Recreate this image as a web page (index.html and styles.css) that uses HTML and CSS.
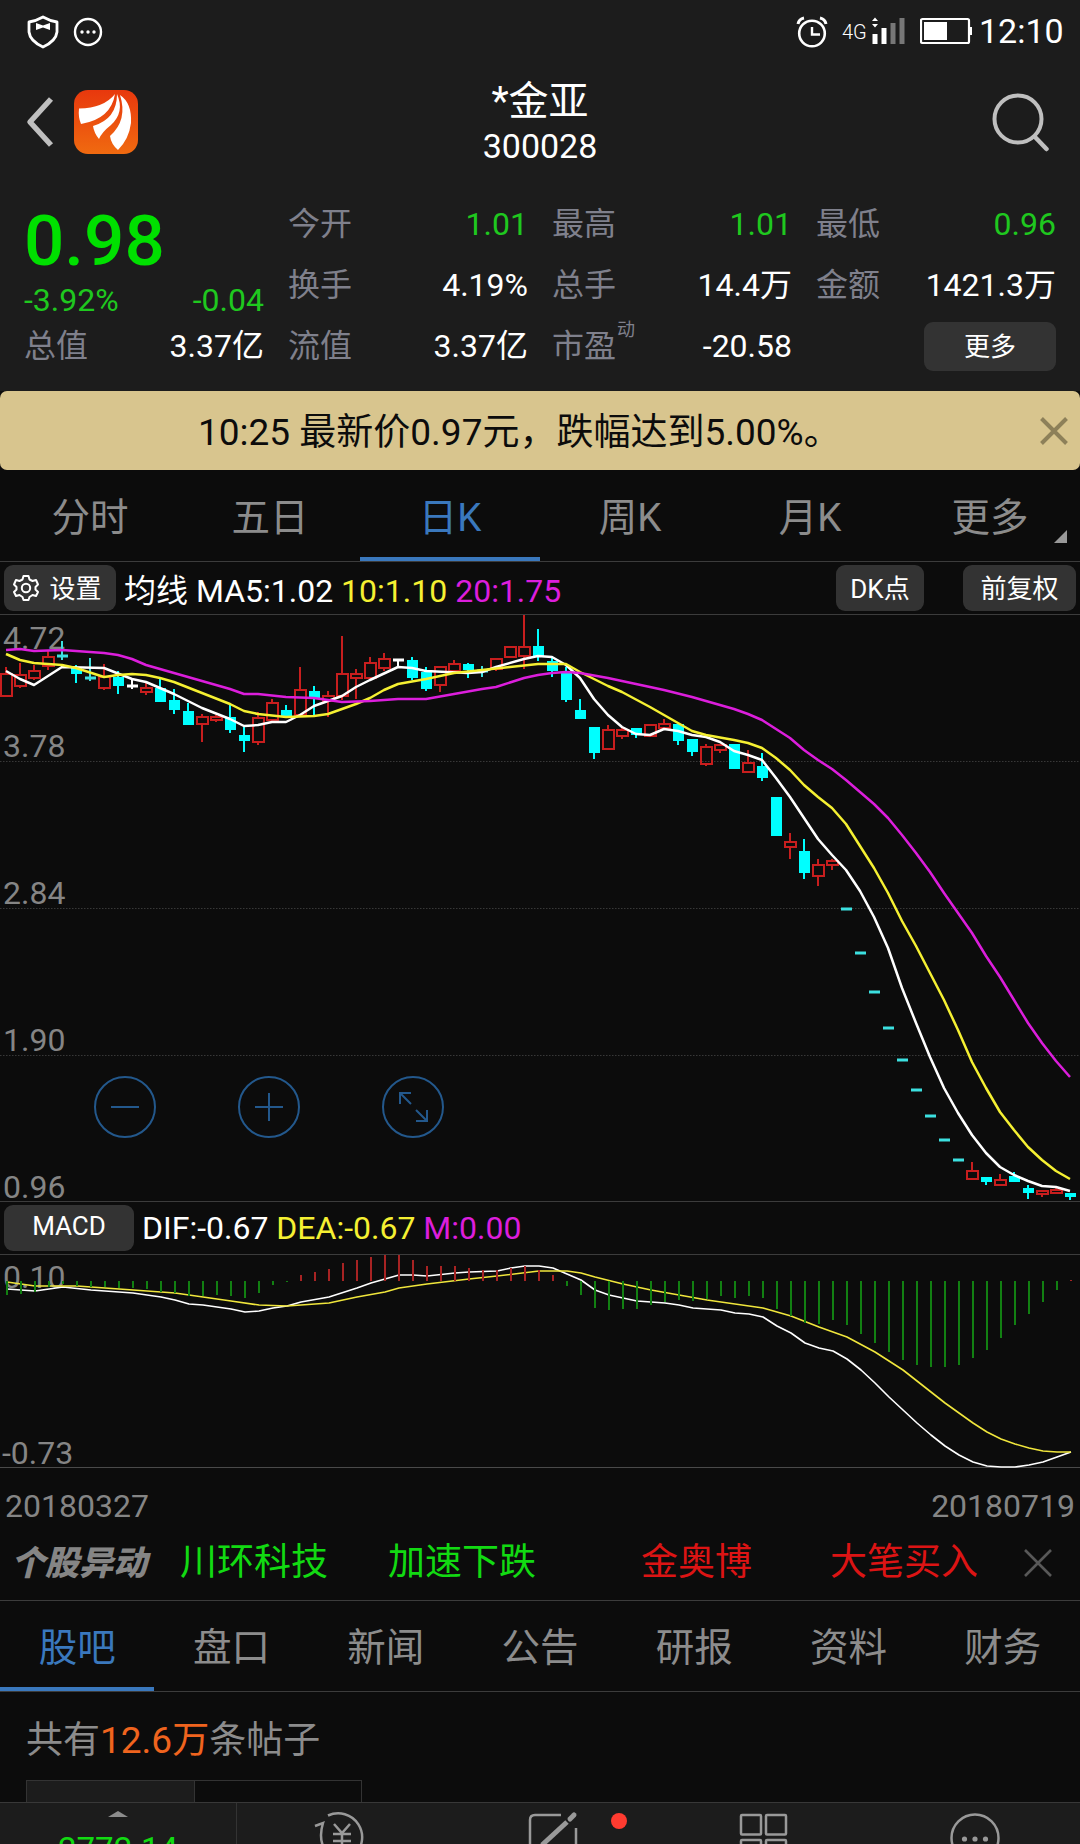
FILE: index.html
```html
<!DOCTYPE html>
<html lang="zh-CN">
<head>
  <meta charset="UTF-8" />
  <meta name="viewport" content="width=device-width, initial-scale=1.0"/>
  <title>*金亚 300028</title>
  <link rel="stylesheet" href="styles.css">
</head>
<body>
  <div class="status-bar">
    <svg class="status-left" width="80" height="64" viewBox="0 0 80 64">
      <path d="M16 17 Q23 21 30 22 V32 Q29 41 16 47 Q3 41 2 32 V22 Q9 21 16 17 Z" fill="none" stroke="#fff" stroke-width="2.8" stroke-linejoin="round"/>
      <path d="M9 23 L16 25.500 L23 23 V30 L16 27.500 L9 30 Z" fill="#fff"/>
      <circle cx="61" cy="32" r="13" fill="none" stroke="#fff" stroke-width="2.4"/>
      <circle cx="55" cy="32" r="1.7" fill="#fff"/>
      <circle cx="61" cy="32" r="1.7" fill="#fff"/>
      <circle cx="67" cy="32" r="1.7" fill="#fff"/>
    </svg>
    <div class="status-right">
      <svg class="alarm" width="34" height="64" viewBox="0 0 34 64">
        <circle cx="17" cy="33.500" r="12.800" fill="none" stroke="#fff" stroke-width="2.600"/>
        <path d="M3 24 Q4 19 9 18 M31 24 Q30 19 25 18" fill="none" stroke="#fff" stroke-width="3"/>
        <path d="M17 27 V34.500 H25" fill="none" stroke="#fff" stroke-width="2.400"/>
      </svg>
      <span class="net">4G</span>
      <svg width="36" height="64" viewBox="0 0 36 64">
        <path d="M2 21 L5 17.500 L8 21 Z M2 24 L5 27.500 L8 24 Z" fill="#fff"/>
        <rect x="2.500" y="34" width="5" height="10" fill="#fff"/>
        <rect x="11.500" y="28" width="5" height="16" fill="#fff"/>
        <rect x="20.500" y="23" width="5" height="21" fill="#777"/>
        <rect x="29.500" y="18" width="5" height="26" fill="#777"/>
      </svg>
      <svg class="battery" width="54" height="64" viewBox="0 0 54 64">
        <rect x="1" y="19" width="48" height="24" rx="1.500" fill="none" stroke="#fff" stroke-width="2.200"/>
        <rect x="4" y="22" width="23" height="18" fill="#fff"/>
        <rect x="49" y="27" width="3" height="8" fill="#fff"/>
      </svg>
      <span class="time">12:10</span>
    </div>
  </div>

  <div class="header">
    <div class="header-left">
      <svg class="back" width="30" height="52" viewBox="0 0 30 52">
        <path d="M27 3 L6 26 L27 49" fill="none" stroke="#bfbfbf" stroke-width="5.500" stroke-linejoin="round"/>
      </svg>
      <svg width="64" height="64" viewBox="0 0 64 64">
        <defs>
          <linearGradient id="logo-bg" x1="0" y1="0" x2="0" y2="1">
            <stop offset="0" stop-color="#e8380d"/>
            <stop offset="1" stop-color="#f06a10"/>
          </linearGradient>
        </defs>
        <rect width="64" height="64" rx="14" fill="url(#logo-bg)"/>
        <path d="M5 18.500 Q30 18 41 4 Q37 29 7 34 Q4 27 5 18.500 Z" fill="#fff"/>
        <path d="M43 4 Q43 29 19 36 Q20 43 25 49 Q28 42 37 35 Q51 22 43 4 Z" fill="#fff"/>
        <path d="M46 5 Q58 13 57 33 Q55 49 44 60 Q37 54 36 46 Q54 30 46 5 Z" fill="#fff"/>
      </svg>
    </div>
    <div class="header-title">
      <div class="name">*金亚</div>
      <div class="code">300028</div>
    </div>
    <svg class="search" width="60" height="60" viewBox="0 0 60 60">
      <circle cx="28" cy="27" r="23.500" fill="none" stroke="#bfbfbf" stroke-width="4"/>
      <path d="M45 45 L56.500 57" stroke="#bfbfbf" stroke-width="4.500" stroke-linecap="round"/>
    </svg>
  </div>

  <div class="quote">
    <div class="quote-col">
      <div class="price">0.98</div>
      <div class="change"><span>-3.92%</span><span>-0.04</span></div>
      <div class="item"><label>总值</label><span>3.37亿</span></div>
    </div>
    <div class="quote-col">
      <div class="item"><label>今开</label><span class="down">1.01</span></div>
      <div class="item"><label>换手</label><span>4.19%</span></div>
      <div class="item"><label>流值</label><span>3.37亿</span></div>
    </div>
    <div class="quote-col">
      <div class="item"><label>最高</label><span class="down">1.01</span></div>
      <div class="item"><label>总手</label><span>14.4万</span></div>
      <div class="item"><label>市盈<sup>动</sup></label><span>-20.58</span></div>
    </div>
    <div class="quote-col">
      <div class="item"><label>最低</label><span class="down">0.96</span></div>
      <div class="item"><label>金额</label><span>1421.3万</span></div>
      <div class="item item-more"><button class="btn more-btn">更多</button></div>
    </div>
  </div>

  <div class="notice">
    <span>10:25 最新价0.97元，跌幅达到5.00%。</span>
    <svg class="notice-close" width="28" height="28" viewBox="0 0 28 28">
      <path d="M1.500 1.500 L26.500 26.500 M26.500 1.500 L1.500 26.500" stroke="#8d8059" stroke-width="4"/>
    </svg>
  </div>

  <div class="tabs period-tabs">
    <div class="tab">分时</div>
    <div class="tab">五日</div>
    <div class="tab active">日K</div>
    <div class="tab">周K</div>
    <div class="tab">月K</div>
    <div class="tab tab-more">更多</div>
  </div>

  <div class="toolbar">
    <button class="btn set-btn">
      <svg width="28" height="28" viewBox="0 0 28 28" fill="none" stroke="#fff" stroke-width="2" stroke-linejoin="round">
        <path d="M11.500 2 H16.500 L17.500 5.500 L20.500 7 L24 6 L26 10.500 L23.500 13 V15.500 L26 18 L24 22 L20.500 21 L17.500 23 L16.500 26 H11.500 L10.500 23 L7.500 21 L4 22 L2 18 L4.500 15.500 V13 L2 10.500 L4 6 L7.500 7 L10.500 5.500 Z"/>
        <circle cx="14" cy="14" r="4.200"/>
      </svg>
      设置
    </button>
    <div class="legend">均线 MA5:1.02 <span class="yellow">10:1.10</span> <span class="magenta">20:1.75</span></div>
    <button class="btn dk-btn">DK点</button>
    <button class="btn fq-btn">前复权</button>
  </div>

  <div class="chart">
    <svg id="kline" width="1080" height="586" viewBox="0 615 1080 586"></svg>
    <div class="zoom-btns">
      <svg width="64" height="64" viewBox="0 0 64 64"><circle cx="32" cy="32" r="30"/><path d="M18 32 H46"/></svg>
      <svg width="64" height="64" viewBox="0 0 64 64"><circle cx="32" cy="32" r="30"/><path d="M18 32 H46 M32 18 V46"/></svg>
      <svg width="64" height="64" viewBox="0 0 64 64"><circle cx="32" cy="32" r="30"/><path d="M30 29 L19 18 M19 29 V18 H30 M35 35 L46 46 M46 35 V46 H35"/></svg>
    </div>
  </div>

  <div class="toolbar macd-bar">
    <button class="btn macd-btn">MACD</button>
    <div class="legend">DIF:-0.67 <span class="yellow">DEA:-0.67</span> <span class="magenta">M:0.00</span></div>
  </div>

  <div class="chart macd-chart">
    <svg id="macd" width="1080" height="212" viewBox="0 1255 1080 212"></svg>
  </div>

  <div class="dates"><span>20180327</span><span>20180719</span></div>

  <div class="alerts">
    <span class="alerts-title">个股异动</span>
    <span class="alert-a">川环科技</span>
    <span class="alert-b">加速下跌</span>
    <span class="alert-c">金奥博</span>
    <span class="alert-d">大笔买入</span>
    <svg width="30" height="30" viewBox="0 0 30 30">
      <path d="M2 2 L28 28 M28 2 L2 28" stroke="#585858" stroke-width="2.600"/>
    </svg>
  </div>

  <div class="tabs info-tabs">
    <div class="tab active">股吧</div>
    <div class="tab">盘口</div>
    <div class="tab">新闻</div>
    <div class="tab">公告</div>
    <div class="tab">研报</div>
    <div class="tab">资料</div>
    <div class="tab">财务</div>
  </div>

  <div class="posts">
    <div class="posts-count">共有<span>12.6万</span>条帖子</div>
    <div class="posts-filter"><div class="on"></div><div></div></div>
  </div>

  <div class="bottom-nav">
    <div class="index">
      <div class="arrow-up"></div>
      <div class="index-value">2772.14</div>
    </div>
    <div class="nav-item">
      <svg width="60" height="60" viewBox="0 0 60 60">
        <path d="M16 5.500 A24 24 0 1 1 10 45 M11 36 Q7 26 11 13 L3 16" />
        <path d="M22 14 L30 23 L38 14 M21 24 H39 M21 31 H39 M30 23 V42"/>
      </svg>
    </div>
    <div class="nav-item">
      <svg width="60" height="60" viewBox="0 0 60 60">
        <path d="M38 5 H12 Q7 5 7 10 V52 H53 V18"/>
        <path d="M19 35 L44 12" stroke-width="5"/>
        <path d="M47 9 L51 5" stroke-width="5" stroke-linecap="round"/>
      </svg>
      <i class="dot"></i>
    </div>
    <div class="nav-item">
      <svg width="60" height="60" viewBox="0 0 60 60">
        <rect x="7" y="5" width="20" height="19.500" rx="1"/>
        <rect x="32" y="5" width="20" height="19.500" rx="1"/>
        <rect x="7" y="30" width="20" height="20" rx="1"/>
        <rect x="32" y="30" width="20" height="20" rx="1"/>
      </svg>
    </div>
    <div class="nav-item">
      <svg width="60" height="60" viewBox="0 0 60 60">
        <circle cx="30" cy="28" r="23.500"/>
        <g fill="#999" stroke="none"><circle cx="19.500" cy="29" r="2.600"/><circle cx="30" cy="29" r="2.600"/><circle cx="40.500" cy="29" r="2.600"/></g>
      </svg>
    </div>
  </div>
  <script src="chart.js"></script>
</body>
</html>
```
FILE: styles.css
```css
* {
  box-sizing: border-box;
}

body {
  margin: 0;
  width: 1080px;
  height: 1844px;
  overflow: hidden;
  background: #0c0c0c;
  color: #fff;
  font-family: Roboto, "Noto Sans CJK SC", sans-serif;
  font-size: 32px;
  display: flex;
  flex-direction: column;
}

body > div {
  flex-shrink: 0;
}

svg {
  display: block;
}

.btn {
  border: none;
  border-radius: 9px;
  background: #333;
  color: #fff;
  font-family: inherit;
  font-size: 26px;
  padding: 0 0 4px;
}

.yellow { color: #f5f032; }
.magenta { color: #dc1edc; }
.down { color: #1fc81f; }

/* status bar */
.status-bar {
  height: 64px;
  padding: 0 16px 0 27px;
  background: #1c1c1c;
  display: flex;
  justify-content: space-between;
}

.status-right {
  display: flex;
  align-items: center;
}

.net {
  font-size: 20px;
  font-weight: 300;
  margin-left: 13px;
  width: 28px;
}

.battery {
  margin-left: 14px;
}

.time {
  font-size: 34px;
  line-height: 62px;
  height: 64px;
  margin-left: 5px;
  width: 85px;
}

/* header */
.header {
  height: 126px;
  padding: 0 30px 0 24px;
  background: #1c1c1c;
  display: grid;
  grid-template-columns: 1fr auto 1fr;
  align-items: start;
}

.header-left {
  display: flex;
  align-items: center;
  gap: 20px;
  padding-top: 26px;
}

.header-title {
  text-align: center;
  padding: 13px 0 0 6px;
}

.name {
  font-size: 40px;
  line-height: 50px;
}

.code {
  font-size: 34px;
  line-height: 39px;
}

.search {
  justify-self: end;
  margin-top: 28px;
}

/* quote */
.quote {
  height: 201px;
  padding: 3px 24px 0;
  background: #1c1c1c;
  display: grid;
  grid-template-columns: repeat(4, 240px);
  column-gap: 24px;
}

.item {
  height: 61px;
  display: flex;
  justify-content: space-between;
  align-items: center;
  line-height: 40px;
}

.item label {
  color: #7f808c;
  display: flex;
}

.item sup {
  font-size: 18px;
  line-height: 1;
  margin: -5px 0 0 1px;
}

.item-more {
  justify-content: flex-end;
}

.more-btn {
  width: 132px;
  height: 49px;
  margin-top: 2px;
}

.price {
  height: 92px;
  line-height: 96px;
  font-size: 71px;
  font-weight: 500;
  color: #00e000;
}

.change {
  height: 30px;
  line-height: 30px;
  color: #1fc81f;
  display: flex;
  justify-content: space-between;
}

/* notice */
.notice {
  height: 79px;
  border-radius: 7px;
  background: #d8c58e;
  color: #0c0c0c;
  font-size: 37px;
  padding: 0 12px 4px 198px;
  display: flex;
  justify-content: space-between;
  align-items: center;
}

.notice-close {
  position: relative;
  top: 2px;
}

/* tabs */
.tabs {
  display: flex;
  height: 92px;
  border-bottom: 1px solid #3c3c3c;
}

.tab {
  flex: 1;
  position: relative;
  font-size: 38.500px;
  line-height: 95px;
  text-align: center;
  color: #8c8c8c;
}

.tab.active {
  color: #3a78bd;
  border-bottom: 4px solid #3a78bd;
}

.tab-more::after {
  content: "";
  position: absolute;
  right: 13px;
  bottom: 18px;
  border-left: 13px solid transparent;
  border-bottom: 13px solid #999;
}

/* chart toolbars */
.toolbar {
  height: 53px;
  border-bottom: 1px solid #3c3c3c;
  padding: 0 4px;
  display: flex;
  align-items: center;
}

.toolbar .btn {
  height: 46px;
}

.toolbar .set-btn {
  width: 112px;
  padding: 0 6px 4px 0;
  display: flex;
  align-items: center;
  justify-content: center;
  gap: 9px;
}

.set-btn svg {
  position: relative;
  top: 2px;
}

.legend {
  flex: 1;
  padding: 0 0 1px 8px;
}

.dk-btn {
  width: 88px;
  margin-right: 39px;
}

.fq-btn {
  width: 113px;
}

.macd-btn {
  width: 130px;
}

/* charts */
.chart {
  position: relative;
  height: 586px;
}

.chart > svg {
  overflow: visible;
}

.chart text {
  font-size: 32px;
  fill: #858585;
}

.macd-bar {
  border-top: 1px solid #3c3c3c;
  height: 54px;
}

.macd-chart {
  height: 212px;
}

.zoom-btns {
  position: absolute;
  left: 93px;
  top: 460px;
  display: flex;
  gap: 80px;
}

.zoom-btns svg {
  fill: none;
  stroke: #23588c;
  stroke-width: 2;
}

.dates {
  height: 63px;
  border-top: 1px solid #4a4a4a;
  padding: 12px 5px 0;
  line-height: 52px;
  color: #858585;
  display: flex;
  justify-content: space-between;
}

/* alerts */
.alerts {
  height: 71px;
  border-bottom: 1px solid #3c3c3c;
  padding: 0 27px 5px 11px;
  font-size: 37px;
  line-height: 60px;
  display: grid;
  grid-template-columns: 169px 208px 253px 189px 1fr 30px;
  align-items: center;
}

.alerts-title {
  font-size: 34px;
  font-weight: 900;
  font-style: italic;
  color: #858585;
}

.alert-a,
.alert-b {
  color: #12da12;
}

.alert-c,
.alert-d {
  color: #dc1414;
}

.info-tabs {
  height: 91px;
}

.info-tabs .tab {
  line-height: 94px;
}

/* posts */
.posts {
  height: 110px;
  padding: 19px 26px 0;
  overflow: hidden;
}

.posts-count {
  font-size: 37px;
  line-height: 60px;
  height: 69px;
  color: #8c8c8c;
}

.posts-count span {
  color: #f0641e;
}

.posts-filter {
  display: flex;
  width: 336px;
  height: 60px;
  border: 1px solid #333;
}

.posts-filter div {
  flex: 1;
}

.posts-filter .on {
  background: #1c1c1c;
  border-right: 1px solid #333;
}

/* bottom nav */
.bottom-nav {
  height: 120px;
  border-top: 1px solid #383838;
  background: #1c1c1c;
  display: flex;
}

.index {
  width: 237px;
  border-right: 1px solid #333;
  display: flex;
  flex-direction: column;
  align-items: center;
  padding-top: 8px;
}

.arrow-up {
  border: 10px solid transparent;
  border-top: 0;
  border-bottom: 6px solid #8c8c8c;
}

.index-value {
  margin-top: 13px;
  font-size: 33px;
  color: #12da12;
}

.nav-item {
  flex: 1;
  position: relative;
  display: flex;
  justify-content: center;
  padding-top: 7px;
}

.nav-item svg {
  fill: none;
  stroke: #999;
  stroke-width: 2.500;
}

.dot {
  position: absolute;
  left: 163px;
  top: 10px;
  width: 16px;
  height: 16px;
  border-radius: 50%;
  background: #ff3b30;
}
```
FILE: chart.js
```js
const STEP = 14;
const RED = '#c81e1e';
const CYAN = '#00ffff';

// [high, open/close top, open/close bottom, low, type] r = up, c = down, w = flat
const candles = [
  [667,674,696,696,'r'],[663,675,686,688,'r'],[665,671,678,680,'r'],[651,657,666,670,'r'],[641,655,657,660,'c'],
  [665,668,674,683,'c'],[658,677,679,681,'c'],[664,677,688,690,'r'],[671,677,686,694,'c'],[680,685,687,689,'w'],
  [683,688,692,695,'r'],[679,688,702,702,'c'],[689,700,710,714,'c'],[703,711,725,725,'c'],[714,717,724,742,'r'],
  [715,717,720,722,'r'],[703,717,730,733,'c'],[727,735,741,752,'c'],[712,718,742,745,'r'],[699,703,720,720,'r'],
  [705,710,717,717,'c'],[667,690,715,715,'r'],[686,691,698,715,'c'],[691,696,701,717,'r'],[636,674,696,700,'r'],
  [669,674,678,699,'r'],[657,663,678,678,'r'],[653,659,668,671,'r'],[660,659,661,667,'w'],[657,660,678,680,'c'],
  [667,672,689,691,'c'],[667,667,685,692,'r'],[660,664,671,671,'r'],[663,664,670,678,'c'],[666,670,672,677,'c'],
  [659,659,669,671,'r'],[646,647,657,657,'r'],[615,647,656,669,'r'],[629,646,657,661,'c'],[656,661,671,677,'c'],
  [667,673,700,702,'c'],[699,710,719,719,'c'],[727,727,753,759,'c'],[725,730,749,750,'r'],[727,730,736,739,'r'],
  [728,728,735,738,'c'],[724,725,736,736,'r'],[719,724,728,728,'r'],[724,724,741,745,'c'],[739,739,752,756,'c'],
  [744,747,764,766,'r'],[745,745,750,753,'r'],[744,744,769,769,'c'],[750,763,772,773,'r'],[753,766,778,781,'c'],
  [797,797,836,836,'c'],[833,842,847,859,'r'],[839,851,873,879,'c'],[859,865,876,886,'r'],[859,861,865,870,'r'],
  [909,908,910,909,'c'],[953,952,954,953,'c'],[992,991,993,992,'c'],[1028,1027,1029,1028,'c'],[1060,1059,1061,1060,'c'],
  [1090,1089,1091,1090,'c'],[1116,1115,1117,1116,'c'],[1140,1139,1141,1140,'c'],[1160,1159,1161,1160,'c'],
  [1162,1171,1179,1179,'r'],[1177,1177,1182,1185,'c'],[1174,1180,1185,1185,'r'],[1172,1176,1182,1182,'c'],
  [1185,1188,1193,1199,'c'],[1190,1191,1194,1197,'r'],[1187,1190,1193,1194,'r'],[1193,1193,1197,1200,'c']
];

// lines are [candle index, y]
const ma5 = [[0,671],[1,679],[2,685],[4,667],[7,668],[9,679],[10,682],[12,694],[14,708],[16,719],[17,726],[18,725],[19,722],[20,722],[21,715],[22,706],[23,701],[24,696],[25,687],[26,680],[28,667],[29,668],[30,671],[33,673],[34,672],[35,667],[37,659],[38,656],[39,657],[40,665],[41,678],[42,699],[43,715],[44,727],[45,734],[46,735],[47,729],[48,731],[49,735],[50,737],[51,742],[52,751],[53,755],[54,760],[55,778],[56,797],[57,818],[58,839],[59,855],[60,870],[61,891],[62,917],[63,948],[64,988],[65,1023],[66,1057],[67,1088],[68,1113],[69,1135],[70,1153],[71,1167],[72,1175],[73,1181],[74,1186],[75,1187],[76,1191]];
const ma10 = [[0,654],[1,660],[2,663],[4,665],[5,668],[7,677],[8,675],[9,674],[10,675],[11,678],[12,682],[14,693],[16,704],[17,711],[18,714],[20,717],[22,716],[23,714],[25,704],[26,698],[27,690],[28,684],[30,679],[32,673],[34,670],[36,667],[38,664],[40,664],[41,672],[43,686],[44,692],[46,707],[48,723],[49,731],[50,735],[52,740],[53,743],[54,748],[55,758],[56,770],[57,785],[58,797],[59,808],[60,824],[61,846],[62,868],[63,893],[64,921],[65,946],[66,973],[67,1000],[68,1030],[69,1062],[70,1088],[71,1112],[72,1130],[73,1147],[74,1160],[75,1171],[76,1179]];
const ma20 = [[0,650],[1,649],[2,651],[4,650],[7,653],[8,655],[9,659],[10,665],[12,673],[14,681],[16,689],[17,694],[18,694],[20,697],[22,698],[23,700],[24,702],[26,701],[28,699],[30,699],[32,694],[34,689],[35,687],[37,678],[38,675],[39,673],[40,672],[41,673],[43,678],[45,684],[47,690],[49,697],[50,701],[52,709],[53,714],[54,720],[55,729],[56,738],[57,750],[58,760],[59,769],[60,780],[61,792],[62,804],[63,818],[64,835],[65,853],[66,872],[67,893],[68,913],[69,933],[70,956],[71,977],[72,1000],[73,1023],[74,1043],[75,1061],[76,1077]];

const dif = [[0,1289],[2,1291],[4,1287],[6,1290],[9,1293],[11,1297],[12,1300],[13,1304],[14,1305],[16,1309],[17,1312],[18,1311],[19,1308],[20,1306],[21,1302],[23,1297],[25,1288],[26,1283],[28,1275],[29,1275],[30,1276],[32,1273],[33,1272],[35,1271],[36,1268],[37,1266],[38,1266],[39,1268],[40,1274],[41,1280],[42,1290],[43,1295],[45,1301],[47,1303],[48,1305],[49,1308],[51,1310],[52,1313],[53,1314],[54,1317],[55,1326],[56,1333],[57,1343],[58,1348],[59,1351],[60,1359],[61,1370],[62,1383],[63,1397],[64,1410],[65,1423],[66,1435],[67,1446],[68,1455],[69,1462],[70,1466],[71,1467],[72,1467],[73,1465],[74,1462],[75,1457],[76,1452]];
const dea = [[0,1282],[2,1286],[5,1286],[8,1289],[12,1293],[14,1297],[16,1301],[18,1305],[20,1306],[22,1304],[23,1303],[25,1297],[27,1292],[28,1288],[30,1284],[33,1279],[35,1276],[38,1271],[40,1271],[41,1273],[42,1277],[44,1284],[46,1290],[48,1295],[50,1300],[54,1308],[56,1316],[58,1327],[60,1337],[62,1352],[64,1370],[66,1392],[67,1403],[68,1413],[69,1423],[70,1432],[71,1439],[72,1444],[73,1448],[74,1451],[75,1452],[76,1452]];

const ZERO = 1281;
const bars = [1295,1294,1292,1287,1284,1286,1287,1287,1288,1288,1289,1292,1293,1296,1296,1295,1296,1298,1293,1285,1282,
  1275,1272,1269,1263,1260,1257,1255,1255,1260,1266,1266,1266,1268,1270,1270,1268,1266,1270,1275,
  1286,1295,1308,1310,1309,1309,1305,1302,1300,1301,1299,1296,1298,1296,1298,1309,1316,1323,1324,1320,
  1325,1334,1343,1352,1360,1365,1367,1367,1365,1358,1350,1338,1325,1314,1302,1290,1280];

function line(points, color, width, left) {
  const pts = points.map(p => (left + p[0] * STEP) + ',' + p[1]).join(' ');
  return `<polyline points="${pts}" fill="none" stroke="${color}" stroke-width="${width}" stroke-linejoin="round"/>`;
}

function drawKline() {
  let out = '';
  [761, 908, 1055].forEach(y => {
    out += `<path d="M0 ${y + 0.5} H1080" stroke="#383838" stroke-dasharray="1.500 1.500"/>`;
  });
  [['4.72', 649], ['3.78', 757], ['2.84', 904], ['1.90', 1051], ['0.96', 1198]].forEach(t => {
    out += `<text x="3" y="${t[1]}">${t[0]}</text>`;
  });
  candles.forEach((c, i) => {
    const x = 6 + i * STEP;
    const [high, top, bottom, low, type] = c;
    if (type === 'r') {
      out += `<path d="M${x} ${high} V${top} M${x} ${bottom} V${low}" stroke="${RED}" stroke-width="2"/>`;
      out += `<rect x="${x - 5}" y="${top}" width="11" height="${bottom - top}" fill="none" stroke="${RED}" stroke-width="2"/>`;
    } else {
      const dash = bottom - top <= 2;
      const color = type === 'w' ? '#fff' : (dash ? '#3ce0e0' : CYAN);
      out += `<path d="M${x} ${high} V${low}" stroke="${color}" stroke-width="2"/>`;
      out += `<rect x="${x - 5}" y="${dash ? top - 0.5 : top}" width="11" height="${dash ? 3 : bottom - top}" fill="${color}"/>`;
    }
  });
  out += line(ma5, '#fff', 2.5, 6);
  out += line(ma10, '#f5f032', 2.5, 6);
  out += line(ma20, '#dc1edc', 2.5, 6);
  document.getElementById('kline').innerHTML = out;
}

function drawMacd() {
  let out = '<text x="3" y="1288">0.10</text><text x="2" y="1464">-0.73</text>';
  out += line(dif, '#fff', 1.6, 7);
  out += line(dea, '#f0e63c', 1.6, 7);
  bars.forEach((y, i) => {
    out += `<path d="M${7 + i * STEP} ${ZERO} V${y}" stroke="${y > ZERO ? '#128012' : '#a82323'}" stroke-width="2"/>`;
  });
  document.getElementById('macd').innerHTML = out;
}

drawKline();
drawMacd();
```
